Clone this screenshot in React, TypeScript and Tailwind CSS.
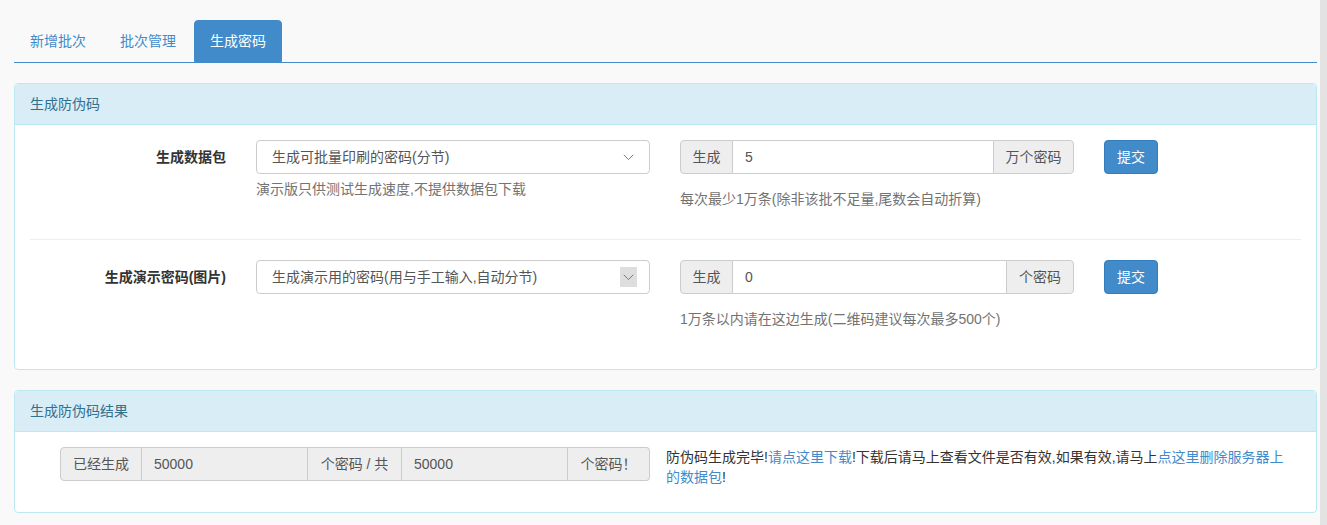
import React from "react";

const Chevron = () => (
  <svg width="11" height="7" viewBox="0 0 11 7" fill="none">
    <path d="M0.8 0.8 L5.5 5.6 L10.2 0.8" stroke="#7a7a7a" strokeWidth="1" />
  </svg>
);

function Select({ text, boxed }: { text: string; boxed?: boolean }) {
  return (
    <div className="flex h-[34px] w-[394px] items-center justify-between rounded-[4px] border border-[#cccccc] bg-white pl-[15px] pr-[12px] text-[14px] leading-[20px] text-[#555555]">
      <span>{text}</span>
      {boxed ? (
        <span className="flex h-[20px] w-[17px] items-center justify-center bg-[#dedede]">
          <Chevron />
        </span>
      ) : (
        <span className="flex h-[20px] w-[17px] items-center justify-center">
          <Chevron />
        </span>
      )}
    </div>
  );
}

function GenGroup({ value, suffix, inputW }: { value: string; suffix: string; inputW: string }) {
  return (
    <div className="flex h-[34px] w-[394px] text-[14px] leading-[20px] text-[#555555]">
      <div className="flex w-[53px] items-center justify-center rounded-l-[4px] border border-[#cccccc] bg-[#eeeeee]">
        生成
      </div>
      <div className={`flex ${inputW} items-center border-y border-[#cccccc] bg-white px-[12px]`}>{value}</div>
      <div className="flex flex-1 items-center justify-center rounded-r-[4px] border border-[#cccccc] bg-[#eeeeee]">
        {suffix}
      </div>
    </div>
  );
}

function SubmitBtn() {
  return (
    <button className="h-[34px] w-[54px] rounded-[4px] border border-[#357ebd] bg-[#428bca] text-[14px] leading-[20px] text-white">
      提交
    </button>
  );
}

function PanelHeading({ title }: { title: string }) {
  return (
    <div className="h-[41px] rounded-t-[4px] border-b border-[#bce8f1] bg-[#d9edf7] px-[15px] py-[10px] text-[14px] leading-[20px] text-[#31708f]">
      {title}
    </div>
  );
}

export default function App() {
  return (
    <div
      className="flex min-h-[525px] w-[1327px] bg-[#f9f9f9] text-[#333333]"
      style={{ fontFamily: '"Liberation Sans", "Noto Sans CJK SC", sans-serif' }}
    >
      <div className="w-[1320px] pl-[14px] pt-[20px]">
        <div className="w-[1303px]">
          {/* Tabs */}
          <div className="flex h-[43px] gap-[2px] border-b border-[#428bca] text-[14px] leading-[20px]">
            <div className="h-[42px] rounded-t-[4px] border border-transparent px-[15px] py-[10px] text-[#428bca]">新增批次</div>
            <div className="h-[42px] rounded-t-[4px] border border-transparent px-[15px] py-[10px] text-[#428bca]">批次管理</div>
            <div className="h-[42px] rounded-t-[4px] border border-[#428bca] bg-[#428bca] px-[15px] py-[10px] text-white">生成密码</div>
          </div>

          {/* Panel 1 */}
          <div className="mt-[20px] rounded-[4px] border border-[#bce8f1] bg-white">
            <PanelHeading title="生成防伪码" />
            <div className="px-[15px] pb-[40px] pt-[15px]">
              <div className="flex items-start gap-[30px]">
                <div className="w-[196px] pt-[7px] text-right text-[14px] font-bold leading-[20px] text-[#333333]">生成数据包</div>
                <div>
                  <Select text="生成可批量印刷的密码(分节)" />
                  <div className="mt-[5px] text-[14px] leading-[20px] text-[#737373]">演示版只供测试生成速度,不提供数据包下载</div>
                </div>
                <div>
                  <GenGroup value="5" suffix="万个密码" inputW="w-[260px]" />
                  <div className="mt-[15px] text-[14px] leading-[20px] text-[#737373]">每次最少1万条(除非该批不足量,尾数会自动折算)</div>
                </div>
                <SubmitBtn />
              </div>
              <div className="mb-[20px] mt-[30px] h-px bg-[#eeeeee]" />
              <div className="flex items-start gap-[30px]">
                <div className="w-[196px] pt-[7px] text-right text-[14px] font-bold leading-[20px] text-[#333333]">生成演示密码(图片)</div>
                <div>
                  <Select text="生成演示用的密码(用与手工输入,自动分节)" boxed />
                </div>
                <div>
                  <GenGroup value="0" suffix="个密码" inputW="w-[273px]" />
                  <div className="mt-[15px] text-[14px] leading-[20px] text-[#737373]">1万条以内请在这边生成(二维码建议每次最多500个)</div>
                </div>
                <SubmitBtn />
              </div>
            </div>
          </div>

          {/* Panel 2 */}
          <div className="mt-[20px] rounded-[4px] border border-[#bce8f1] bg-white">
            <PanelHeading title="生成防伪码结果" />
            <div className="flex items-start px-[15px] pb-[15px] pt-[15px]">
              <div className="ml-[30px] flex h-[34px] w-[590px] text-[14px] leading-[20px] text-[#555555]">
                <div className="flex w-[82px] items-center justify-center rounded-l-[4px] border border-[#cccccc] bg-[#eeeeee]">已经生成</div>
                <div className="flex w-[166px] items-center border-y border-r border-[#cccccc] bg-[#eeeeee] px-[12px]">50000</div>
                <div className="flex w-[94px] items-center justify-center border-y border-r border-[#cccccc] bg-[#eeeeee]">个密码 / 共</div>
                <div className="flex w-[166px] items-center border-y border-r border-[#cccccc] bg-[#eeeeee] px-[12px]">50000</div>
                <div className="flex flex-1 items-center justify-center rounded-r-[4px] border-y border-r border-[#cccccc] bg-[#eeeeee]">个密码！</div>
              </div>
              <p className="mb-[10px] ml-[16px] w-[620px] text-[14px] leading-[20px] text-[#333333]">
                防伪码生成完毕!<a className="text-[#428bca]">请点这里下载</a>!下载后请马上查看文件是否有效,如果有效,请马上<a className="text-[#428bca]">点这里删除服务器上的数据包</a>!
              </p>
            </div>
          </div>
        </div>
      </div>
      <div className="w-[7px] bg-[#e3e3e3]" />
    </div>
  );
}
